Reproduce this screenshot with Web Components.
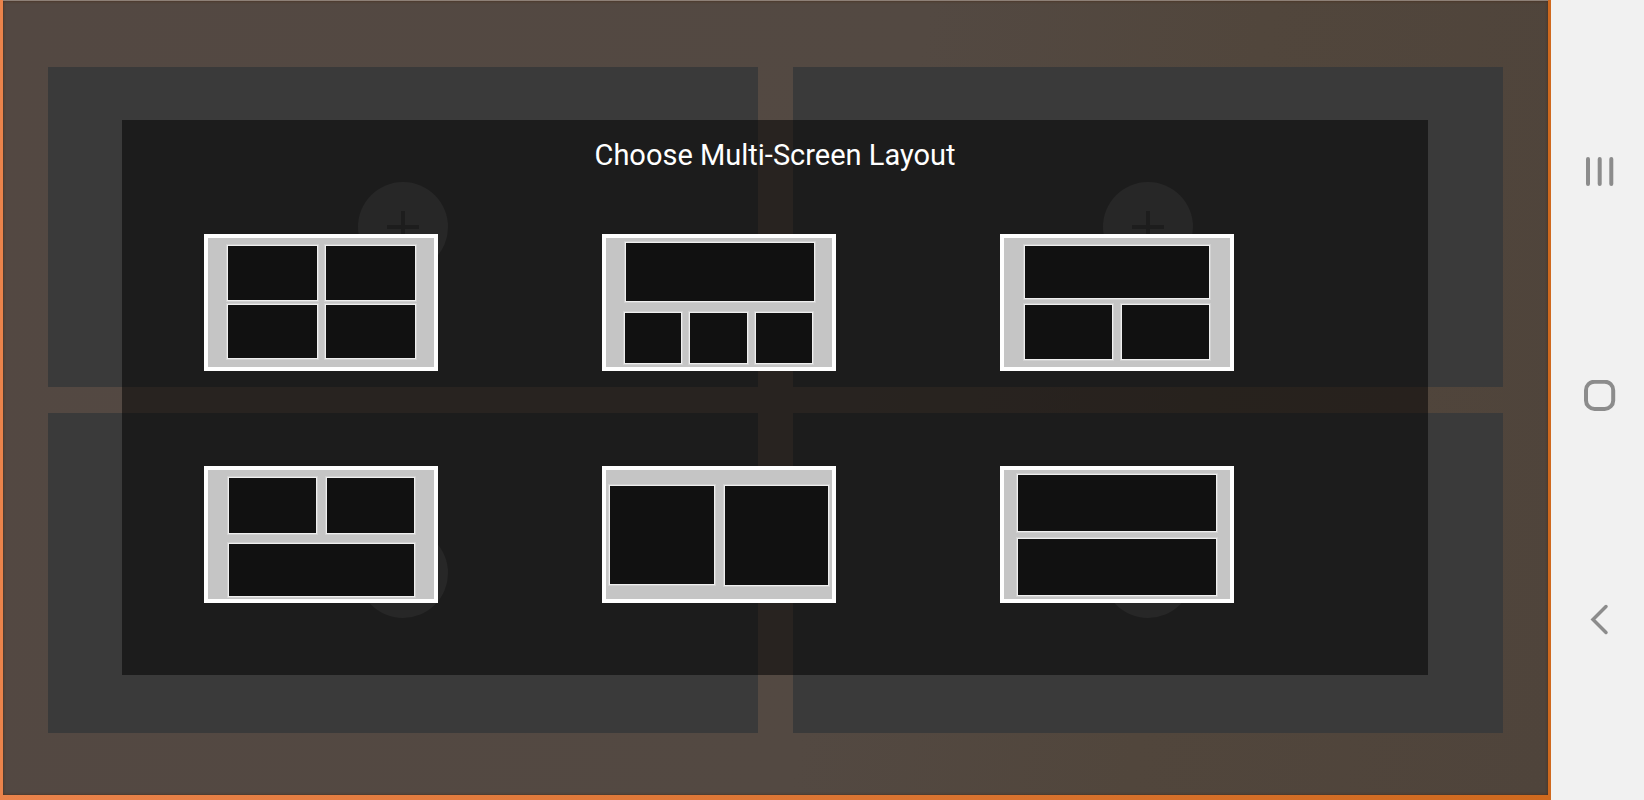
<!DOCTYPE html>
<html lang="en">
<head>
<meta charset="utf-8">
<title>Choose Multi-Screen Layout</title>
<style>
  html, body { margin: 0; height: 100%; }
  body { font-family: Roboto, "Liberation Sans", sans-serif; background: #f1f1f1; }
</style>
</head>
<body>
<multi-screen-app></multi-screen-app>
<script>
class ShadowElement extends HTMLElement {
  constructor() {
    super();
    this.attachShadow({ mode: "open" }).innerHTML = this.render();
  }
  render() { return ""; }
}

/* An empty screen slot with a round add button */
customElements.define("screen-slot", class extends ShadowElement {
  render() {
    return `<style>
      :host { display: flex; align-items: center; justify-content: center; background: #3a3a3a; }
      button { width: 90px; height: 90px; padding: 0; border: 0; border-radius: 50%; background: #515151;
        display: flex; align-items: center; justify-content: center; }
    </style>
    <button type="button" aria-label="Add screen">
      <svg width="34" height="34" viewBox="0 0 34 34"><path d="M17 1v32M1 17h32" stroke="#3b3b3b" stroke-width="4"/></svg>
    </button>`;
  }
});

/* Thumbnail button; the panes come from the layout name */
const LAYOUTS = {
  "2x2": [[24,12,89,54],[122,12,89,54],[24,71,89,53],[122,71,89,53]],
  "1-over-3": [[24,9,188,58],[23,79,56,50],[88,79,57,50],[154,79,56,50]],
  "1-over-2": [[25,12,184,52],[25,71,87,54],[122,71,87,54]],
  "2-over-1": [[25,12,87,55],[123,12,87,55],[25,78,185,52]],
  "side-by-side": [[8,20,104,98],[123,20,103,99]],
  "stacked": [[18,9,198,56],[18,73,198,56]]
};
customElements.define("layout-option", class extends ShadowElement {
  render() {
    return `<style>
      :host { display: block; }
      button { display: block; padding: 0; border: 0; background: none; }
      svg { display: block; width: 234px; height: 137px; }
    </style>
    <button type="button"><svg viewBox="0 0 234 137"></svg></button>`;
  }
  connectedCallback() {
    const name = this.getAttribute("name");
    this.shadowRoot.querySelector("button").setAttribute("aria-label", name + " layout");
    const ring = (x, y, w, h, d, fill) =>
      `<rect x="${x - d}" y="${y - d}" width="${w + 2 * d}" height="${h + 2 * d}" fill="${fill}"/>`;
    const panes = LAYOUTS[name].map(p =>
      ring(...p, 2, "#d2d2d2") + ring(...p, 1, "#efefef") + ring(...p, 0, "#111")).join("");
    this.shadowRoot.querySelector("svg").innerHTML =
      `<rect width="234" height="137" fill="#fff"/><rect x="4" y="4" width="226" height="129" fill="#c5c5c5"/>${panes}`;
  }
});

customElements.define("layout-dialog", class extends ShadowElement {
  render() {
    return `<style>
      :host { display: flex; flex-direction: column; background: rgba(0,0,0,.51); color: #fff; }
      h1 { margin: 0; padding-top: 17px; font-size: 29px; line-height: 36px; font-weight: 400; text-align: center; }
      .options { display: grid; grid-template-columns: repeat(3, 1fr); justify-items: center;
        row-gap: 95px; padding: 61px 112px 0 0; }
    </style>
    <h1><slot name="title"></slot></h1>
    <div class="options"><slot></slot></div>`;
  }
});

customElements.define("screen-stage", class extends ShadowElement {
  render() {
    return `<style>
      :host { display: block; position: relative; box-sizing: border-box; padding: 1px 3px 5px 3px;
        background: linear-gradient(90deg, #ea834b, #cf691e); }
      .wall { box-sizing: border-box; height: 100%; display: grid; grid-template: 1fr 1fr / 1fr 1fr;
        gap: 26px 35px; padding: 66px 45px 62px 45px;
        background: linear-gradient(100deg, #534842, #534942 55%, #51463c 75%, #4f443b);
        box-shadow: 0 -1px #8d8077, inset 0 0 3px #4a2c18; }
      layout-dialog { position: absolute; inset: 120px 123px 125px 122px; }
    </style>
    <div class="wall"><screen-slot></screen-slot><screen-slot></screen-slot><screen-slot></screen-slot><screen-slot></screen-slot></div>
    <layout-dialog role="dialog">
      <span slot="title">Choose Multi-Screen Layout</span>
      <layout-option name="2x2"></layout-option>
      <layout-option name="1-over-3"></layout-option>
      <layout-option name="1-over-2"></layout-option>
      <layout-option name="2-over-1"></layout-option>
      <layout-option name="side-by-side"></layout-option>
      <layout-option name="stacked"></layout-option>
    </layout-dialog>`;
  }
});

customElements.define("system-nav", class extends ShadowElement {
  render() {
    return `<style>
      :host { display: flex; flex-direction: column; align-items: center; box-sizing: border-box;
        padding: 60px 0 68px 4px; background: #f1f1f1; }
      button { flex: 1; width: 60px; padding: 0; border: 0; background: none;
        display: flex; align-items: center; justify-content: center; }
      svg { fill: none; stroke: #8c8c8c; stroke-width: 4; stroke-linecap: round; stroke-linejoin: miter; }
    </style>
    <button type="button" aria-label="Recents"><svg width="32" height="32" viewBox="0 0 32 32"><path d="M4 3v25M15.700 3v25M27.300 3v25"/></svg></button>
    <button type="button" aria-label="Home"><svg width="32" height="32" viewBox="0 0 32 32"><rect x="2" y="1.700" width="27.200" height="27.200" rx="8.500"/></svg></button>
    <button type="button" aria-label="Back"><svg width="32" height="32" viewBox="0 0 32 32"><path d="M22 2.500 9 15.500l13 13" stroke-width="3.500"/></svg></button>`;
  }
});

customElements.define("multi-screen-app", class extends ShadowElement {
  render() {
    return `<style>
      :host { display: grid; grid-template-columns: 1fr 93px; min-height: 100vh; }
    </style>
    <screen-stage></screen-stage><system-nav></system-nav>`;
  }
});
</script>
</body>
</html>
